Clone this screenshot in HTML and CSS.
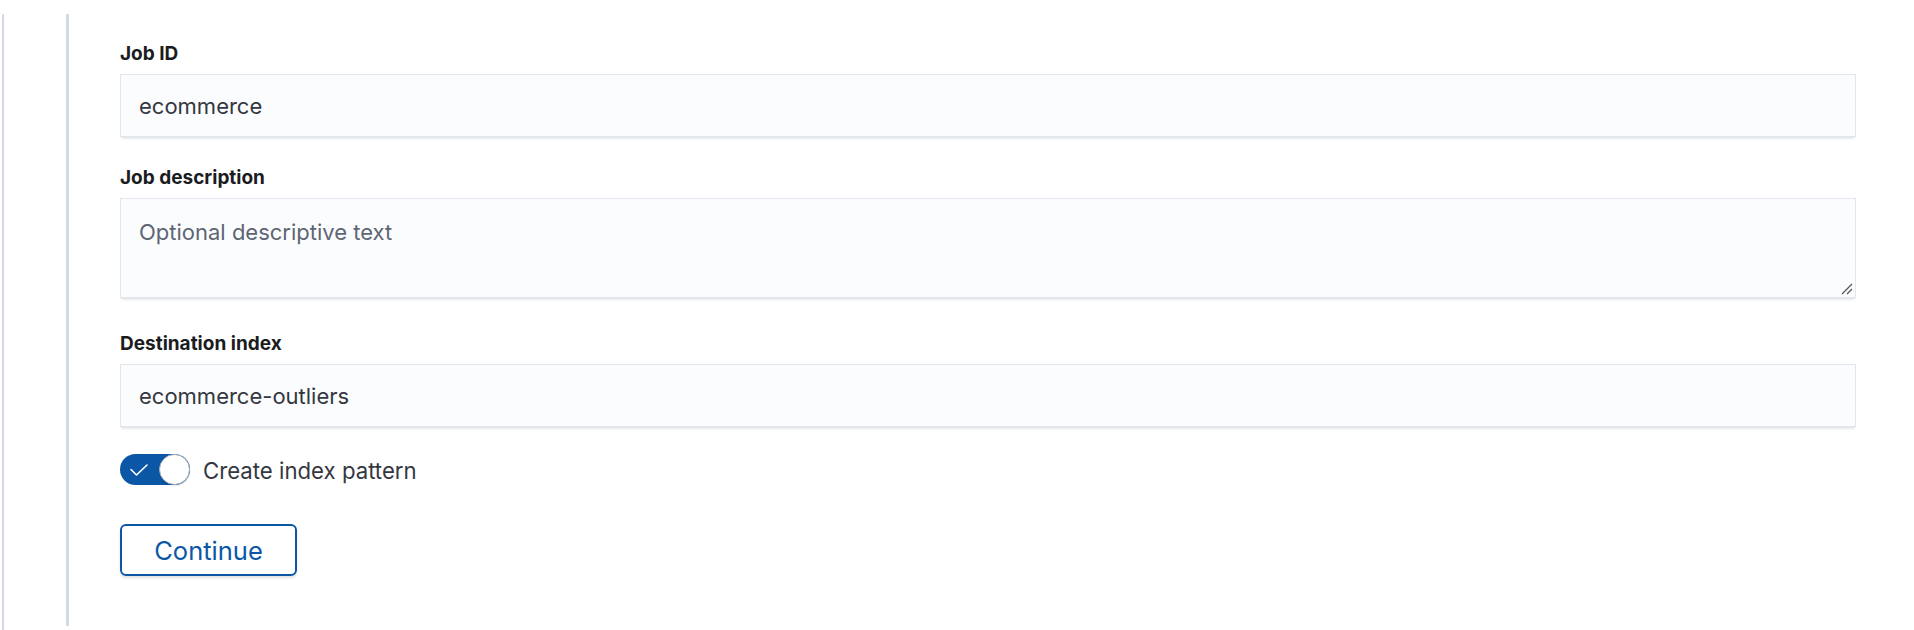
FILE: index.html
```html
<!DOCTYPE html>
<html>
<head>
<meta charset="utf-8">
<link rel="stylesheet" href="styles.css">
</head>
<body>
<div class="page">
  <div class="step">
    <form class="form">
      <div class="row">
        <label class="label">Job ID</label>
        <div class="field"><span class="value">ecommerce</span></div>
      </div>
      <div class="row">
        <label class="label">Job description</label>
        <div class="field area">
          <span class="placeholder">Optional descriptive text</span>
          <svg class="grip" width="12" height="12" viewBox="0 0 12 12"><path d="M11 1 L1 11 M11 6 L6 11" stroke="#555" stroke-width="1.3" fill="none"/></svg>
        </div>
      </div>
      <div class="row">
        <label class="label">Destination index</label>
        <div class="field"><span class="value">ecommerce-outliers</span></div>
      </div>
      <div class="switch-row">
        <span class="switch">
          <svg class="check" width="20" height="14" viewBox="0 0 20 14"><path d="M2 6.5 L7.5 12 L18 2" stroke="#fff" stroke-width="1.6" fill="none" stroke-linecap="round" stroke-linejoin="round"/></svg>
          <span class="knob"></span>
        </span>
        <span class="switch-label">Create index pattern</span>
      </div>
      <div class="actions">
        <span class="button">Continue</span>
      </div>
    </form>
  </div>
</div>
</body>
</html>
```

FILE: styles.css
```css
html, body {
  margin: 0;
  padding: 0;
  background: #fff;
}
body {
  font-family: Inter, "Noto Sans", sans-serif;
  color: #343741;
}
.page {
  margin-left: 2px;
  border-left: 2px solid #d3dae6;
  height: 630px;
  padding-left: 62px;
  box-sizing: border-box;
}
.step {
  margin-top: 14px;
  height: 612px;
  border-left: 3px solid #d3dae6;
  padding: 26px 58px 0 51px;
  box-sizing: border-box;
}
.form {
  display: flex;
  flex-direction: column;
}
.row {
  display: flex;
  flex-direction: column;
  margin-bottom: 27px;
}
.label {
  font-size: 19px;
  line-height: 27px;
  font-weight: 700;
  color: #1a1c21;
  margin-bottom: 7px;
}
.field {
  height: 63px;
  box-sizing: border-box;
  background: #fbfcfd;
  border: 1px solid #e3e6ec;
  box-shadow: 0 2px 2px -1px rgba(152,162,179,.25), 0 4px 3px -2px rgba(152,162,179,.15);
  padding: 0 18px;
  display: flex;
  align-items: center;
  font-size: 22px;
  position: relative;
}
.value {
  color: #343741;
}
.area {
  height: 100px;
  align-items: flex-start;
  padding-top: 17px;
  line-height: 32px;
  margin-bottom: 5px;
}
.placeholder {
  color: #5e6573;
}
.grip {
  position: absolute;
  right: 2px;
  bottom: 2px;
}
.switch-row {
  display: flex;
  align-items: center;
  gap: 13px;
  height: 31px;
  margin-bottom: 39px;
}
.switch {
  position: relative;
  width: 70px;
  height: 31px;
  border-radius: 16px;
  background: #0b57a6;
  flex: none;
}
.check {
  position: absolute;
  left: 9px;
  top: 9px;
}
.knob {
  position: absolute;
  right: 0;
  top: 0;
  width: 31px;
  height: 31px;
  box-sizing: border-box;
  border-radius: 50%;
  background: #fff;
  border: 1.5px solid #a6adb8;
  box-shadow: 0 1px 2px rgba(0,0,0,.1);
}
.switch-label {
  font-size: 22.2px;
  color: #343741;
  padding-top: 2px;
}
.actions {
  display: flex;
}
.button {
  width: 177px;
  height: 52px;
  box-sizing: border-box;
  border: 2px solid #0b57a6;
  border-radius: 6px;
  display: flex;
  align-items: center;
  justify-content: center;
  font-size: 25.5px;
  font-weight: 400;
  color: #0b57a6;
  box-shadow: 0 2px 3px rgba(0,0,0,.12);
}
```
